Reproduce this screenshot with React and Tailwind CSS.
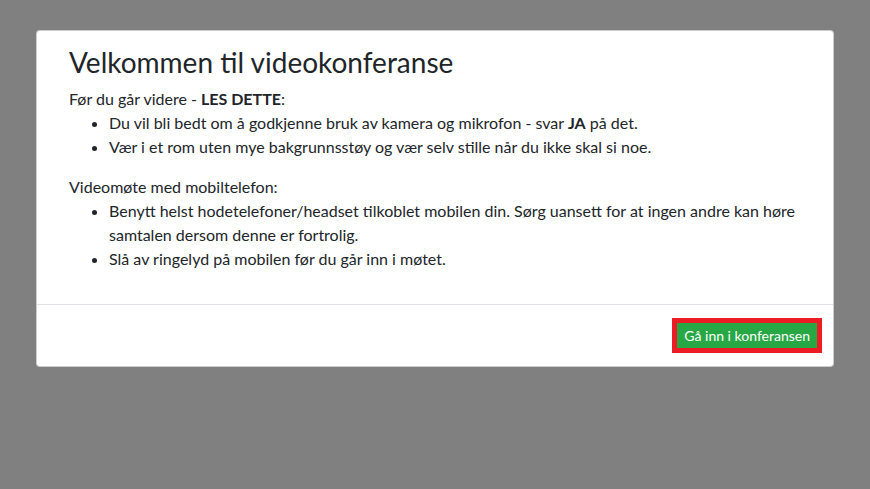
const notes = [
  {
    heading: (
      <>
        Før du går videre - <strong className="font-bold">LES DETTE</strong>:
      </>
    ),
    items: [
      <>
        Du vil bli bedt om å godkjenne bruk av kamera og mikrofon - svar <strong className="font-bold">JA</strong> på det.
      </>,
      'Vær i et rom uten mye bakgrunnsstøy og vær selv stille når du ikke skal si noe.',
    ],
  },
  {
    heading: 'Videomøte med mobiltelefon:',
    items: [
      'Benytt helst hodetelefoner/headset tilkoblet mobilen din. Sørg uansett for at ingen andre kan høre samtalen dersom denne er fortrolig.',
      'Slå av ringelyd på mobilen før du går inn i møtet.',
    ],
  },
];

export default function App() {
  return (
    <div
      className="min-h-[489px] bg-[#808080] pt-[30px] text-[#212529]"
      style={{ fontFamily: 'Lato, "Open Sans", sans-serif' }}
    >
      <div className="mx-auto w-[798px] rounded-[4px] border border-black/20 bg-white">
        <div className="px-[32px] pt-[15px] pb-[17px]">
          <h2 className="mb-[7px] text-[28px] leading-[1.2] font-normal">Velkommen til videokonferanse</h2>
          {notes.map((note, i) => (
            <div key={i} className="text-[16px] leading-[24px]">
              <p>{note.heading}</p>
              <ul className="mb-[16px] list-disc pl-[40px]">
                {note.items.map((item, j) => (
                  <li key={j}>{item}</li>
                ))}
              </ul>
            </div>
          ))}
        </div>
        <div className="flex justify-end border-t border-[#dee2e6] pt-[13px] pr-[11px] pb-[13px]">
          <button
            type="button"
            className="border-[5px] border-[#ed1c24] bg-[#28a745] px-[7px] py-[1px] text-[14px] leading-[23px] text-white"
          >
            Gå inn i konferansen
          </button>
        </div>
      </div>
    </div>
  );
}
